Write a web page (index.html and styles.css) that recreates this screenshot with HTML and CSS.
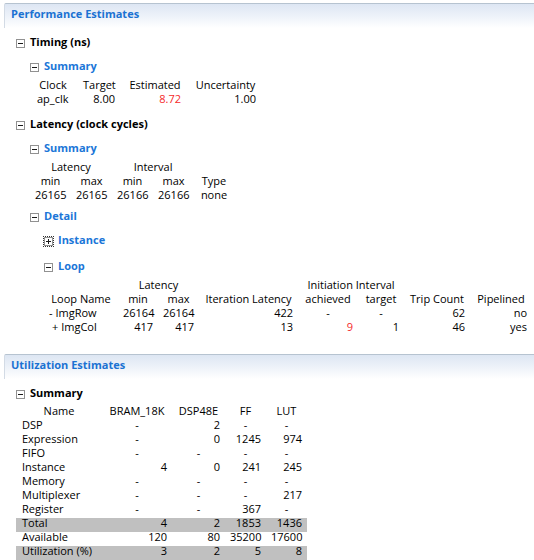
FILE: index.html
```html
<!DOCTYPE html>
<html lang="en">
<head>
<meta charset="utf-8">
<title>Synthesis Report</title>
<link rel="stylesheet" href="styles.css">
</head>
<body>
<section class="panel">
  <div class="panel-head">Performance Estimates</div>
  <div class="tree">
    <div class="node first">
      <div class="title"><span class="tog"></span><span>Timing (ns)</span></div>
      <div class="kids">
        <div class="node">
          <div class="title link"><span class="tog"></span><span>Summary</span></div>
          <table class="rep timing">
            <colgroup><col class="w46"><col class="w46"><col class="w66"><col class="w75"></colgroup>
            <tr><th>Clock</th><th>Target</th><th>Estimated</th><th>Uncertainty</th></tr>
            <tr><td class="l">ap_clk</td><td>8.00</td><td class="red">8.72</td><td>1.00</td></tr>
          </table>
        </div>
      </div>
    </div>
    <div class="node g9">
      <div class="title"><span class="tog"></span><span>Latency (clock cycles)</span></div>
      <div class="kids">
        <div class="node">
          <div class="title link"><span class="tog"></span><span>Summary</span></div>
          <table class="rep lat">
            <colgroup><col class="w41"><col class="w41"><col class="w41"><col class="w41"><col class="w40"></colgroup>
            <tr><th colspan="2">Latency</th><th colspan="2">Interval</th><th></th></tr>
            <tr><th>min</th><th>max</th><th>min</th><th>max</th><th>Type</th></tr>
            <tr><td>26165</td><td>26165</td><td>26166</td><td>26166</td><td class="c">none</td></tr>
          </table>
        </div>
        <div class="node g5">
          <div class="title link"><span class="tog"></span><span>Detail</span></div>
          <div class="kids">
            <div class="node">
              <div class="title link"><span class="tog plus focus"></span><span>Instance</span></div>
            </div>
            <div class="node g12">
              <div class="title link"><span class="tog"></span><span>Loop</span></div>
              <table class="rep loop">
                <colgroup><col class="w74"><col class="w40"><col class="w41"><col class="w99"><col class="w60"><col class="w46"><col class="w66"><col class="w62"></colgroup>
                <tr><th></th><th colspan="2">Latency</th><th></th><th colspan="2">Initiation Interval</th><th></th><th></th></tr>
                <tr><th>Loop Name</th><th>min</th><th>max</th><th>Iteration Latency</th><th>achieved</th><th>target</th><th>Trip Count</th><th>Pipelined</th></tr>
                <tr><td class="l">- ImgRow</td><td>26164</td><td>26164</td><td>422</td><td class="c">-</td><td class="c">-</td><td>62</td><td>no</td></tr>
                <tr><td class="l in">+ ImgCol</td><td>417</td><td>417</td><td>13</td><td class="red">9</td><td>1</td><td>46</td><td>yes</td></tr>
              </table>
            </div>
          </div>
        </div>
      </div>
    </div>
  </div>
</section>

<section class="panel p2">
  <div class="panel-head">Utilization Estimates</div>
  <div class="tree">
    <div class="node first">
      <div class="title"><span class="tog"></span><span>Summary</span></div>
      <table class="rep util">
        <colgroup><col class="w86"><col class="w70"><col class="w53"><col class="w41"><col class="w41"></colgroup>
        <tr><th>Name</th><th>BRAM_18K</th><th>DSP48E</th><th>FF</th><th>LUT</th></tr>
        <tr><td class="l">DSP</td><td class="c">-</td><td>2</td><td class="c">-</td><td class="c">-</td></tr>
        <tr><td class="l">Expression</td><td class="c">-</td><td>0</td><td>1245</td><td>974</td></tr>
        <tr><td class="l">FIFO</td><td class="c">-</td><td class="c">-</td><td class="c">-</td><td class="c">-</td></tr>
        <tr><td class="l">Instance</td><td>4</td><td>0</td><td>241</td><td>245</td></tr>
        <tr><td class="l">Memory</td><td class="c">-</td><td class="c">-</td><td class="c">-</td><td class="c">-</td></tr>
        <tr><td class="l">Multiplexer</td><td class="c">-</td><td class="c">-</td><td class="c">-</td><td>217</td></tr>
        <tr><td class="l">Register</td><td class="c">-</td><td class="c">-</td><td>367</td><td class="c">-</td></tr>
        <tr class="shade"><td class="l">Total</td><td>4</td><td>2</td><td>1853</td><td>1436</td></tr>
        <tr><td class="l">Available</td><td>120</td><td>80</td><td>35200</td><td>17600</td></tr>
        <tr class="shade"><td class="l">Utilization (%)</td><td>3</td><td>2</td><td>5</td><td>8</td></tr>
      </table>
    </div>
  </div>
</section>
</body>
</html>
```

FILE: styles.css
```css
html, body {
  margin: 0;
  padding: 0;
  background: #fff;
}

body {
  font-family: "Segoe UI", "Open Sans", sans-serif;
  font-size: 11px;
  line-height: 14px;
  color: #000;
  overflow: hidden;
}

.panel-head {
  box-sizing: border-box;
  height: 25px;
  margin: 3px 0 0 4px;
  padding: 3px 0 0 6px;
  border-top: 1px solid #b6c3d0;
  border-left: 1px solid #d3dbe5;
  border-top-left-radius: 2px;
  background: linear-gradient(to bottom, #dde6f3 0%, #edf2f9 50%, #ffffff 100%);
  color: #1b72d2;
  font-weight: bold;
}

.p2 .panel-head {
  margin-top: 18px;
}

.tree {
  padding-left: 16px;
}

.node {
  margin-top: 10px;
}

.node.first {
  margin-top: 7px;
}

.node.g9 { margin-top: 9px; }
.node.g5 { margin-top: 5px; }
.node.g12 { margin-top: 12px; }

.kids {
  padding-left: 14px;
}

.title {
  display: flex;
  align-items: flex-start;
  gap: 5px;
  height: 14px;
  font-weight: bold;
  color: #000;
}

.title.link {
  color: #1b76d8;
}

.tog {
  position: relative;
  box-sizing: border-box;
  flex: none;
  width: 9px;
  height: 9px;
  margin-top: 4px;
  border: 1px solid #919191;
  background: #fff;
}

.tog::before {
  content: "";
  position: absolute;
  left: 1px;
  top: 3px;
  width: 5px;
  height: 1px;
  background: #1a1a1a;
}

.tog.plus::after {
  content: "";
  position: absolute;
  left: 3px;
  top: 1px;
  width: 1px;
  height: 5px;
  background: #1a1a1a;
}

.tog.focus {
  outline: 1px dotted #333;
  outline-offset: 0;
}

.rep {
  table-layout: fixed;
  border-collapse: collapse;
  border-spacing: 0;
  margin-top: 7px;
}

.rep th,
.rep td {
  padding: 0 5px 4px;
  line-height: 10px;
  white-space: nowrap;
  overflow: visible;
}

.rep th {
  font-weight: normal;
  text-align: center;
}

.rep td {
  text-align: right;
}

.rep td.l { text-align: left; }
.rep td.c { text-align: center; }
.rep td.in { padding-left: 8px; }

.rep .red { color: #f52a2a; }

.timing { width: 233px; }
.timing th,
.timing td { padding-left: 7px; padding-right: 7px; }

.lat { width: 204px; }
.loop { width: 488px; }
.util { width: 291px; margin-top: 6px; }

.util td.l { padding-left: 6px; }

.shade td { background: #c0c0c0; }

.w40 { width: 40px; }
.w41 { width: 41px; }
.w46 { width: 46px; }
.w53 { width: 53px; }
.w60 { width: 60px; }
.w62 { width: 62px; }
.w66 { width: 66px; }
.w70 { width: 70px; }
.w74 { width: 74px; }
.w75 { width: 75px; }
.w86 { width: 86px; }
.w99 { width: 99px; }
```
